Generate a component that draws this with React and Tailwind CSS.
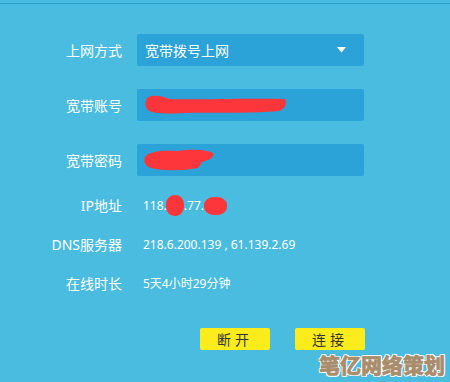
import React from 'react';

const font = { fontFamily: '"Noto Sans", "Noto Sans CJK SC", sans-serif' };

function Field({ label, children }) {
  return (
    <div className="flex items-center h-8">
      <div className="w-[122px] text-right text-[14px] text-white">{label}</div>
      <div className="ml-[15px] w-[227px] h-8 rounded-[2px] bg-[#2ba3d8] flex items-center pl-2 pr-4 text-white text-[14px]">
        {children}
      </div>
    </div>
  );
}

function InfoRow({ label, children }) {
  return (
    <div className="flex items-center h-[39px]">
      <div className="w-[122px] text-right text-[14px] text-white">{label}</div>
      <div className="ml-[21px] text-[12px] text-white flex items-center">{children}</div>
    </div>
  );
}

function Blot({ className }) {
  return <span className={'inline-block bg-[#fc363b] rounded-[45%] ' + className} />;
}

export default function App() {
  return (
    <div className="relative w-[450px] h-[382px] overflow-hidden bg-[#4abce0]" style={font}>
      <div className="h-[3px]" />
      <div className="h-px bg-[#2a9fd2]" />

      <div className="pt-[30px]">
        <Field label="上网方式">
          <span className="flex-1">宽带拨号上网</span>
          <svg width="9" height="6" viewBox="0 0 9 6" className="mr-[2px]">
            <path d="M0 0H9L4.5 5.5Z" fill="#fff" />
          </svg>
        </Field>

        <div className="mt-[23px]">
          <Field label="宽带账号">
            <svg width="146" height="26" viewBox="0 0 146 26" className="-ml-[2px]">
              <path d="M3 9C4 2 16 3 26 7C50 8 100 6 142 7C144 12 142 17 136 19C100 22 60 20 40 21C24 22 10 22 5 18C2 15 2 12 3 9Z" fill="#fc363b" />
            </svg>
          </Field>
        </div>

        <div className="mt-[23px]">
          <Field label="宽带密码">
            <svg width="74" height="26" viewBox="0 0 74 26" className="-ml-[2px]">
              <path d="M2 10C6 4 20 3 34 4C48 2 62 2 70 6C72 10 66 13 62 14C56 15 60 18 54 21C40 24 20 24 8 21C2 19 0 14 2 10Z" fill="#fc363b" />
            </svg>
          </Field>
        </div>

        <div className="mt-[10px]">
          <InfoRow label="IP地址">
            <span>118.</span>
            <Blot className="w-[18px] h-[21px] -ml-[1px]" />
            <span>.77.</span>
            <Blot className="w-[23px] h-[18px]" />
          </InfoRow>
          <InfoRow label="DNS服务器">218.6.200.139 , 61.139.2.69</InfoRow>
          <InfoRow label="在线时长">5天4小时29分钟</InfoRow>
        </div>

        <div className="mt-[25px] flex gap-[25px] pl-[200px]">
          <button className="w-[70px] h-[22px] rounded-[2px] bg-[#fcec1c] text-[#333] text-[14px] tracking-[4px] flex items-center justify-center">
            断开
          </button>
          <button className="w-[70px] h-[22px] rounded-[2px] bg-[#fcec1c] text-[#333] text-[14px] tracking-[4px] flex items-center justify-center">
            连接
          </button>
        </div>
      </div>

      <div className="absolute right-[5px] top-[350px] text-[21px] font-black text-[#a88c6c] [-webkit-text-stroke:0.5px_#a88c6c] [text-shadow:1px_1px_0_#fff,-1px_-1px_0_#fff,1px_-1px_0_#fff,-1px_1px_0_#fff,0_1px_0_#fff,0_-1px_0_#fff,1px_0_0_#fff,-1px_0_0_#fff]">
        笔亿网络策划
      </div>
    </div>
  );
}
